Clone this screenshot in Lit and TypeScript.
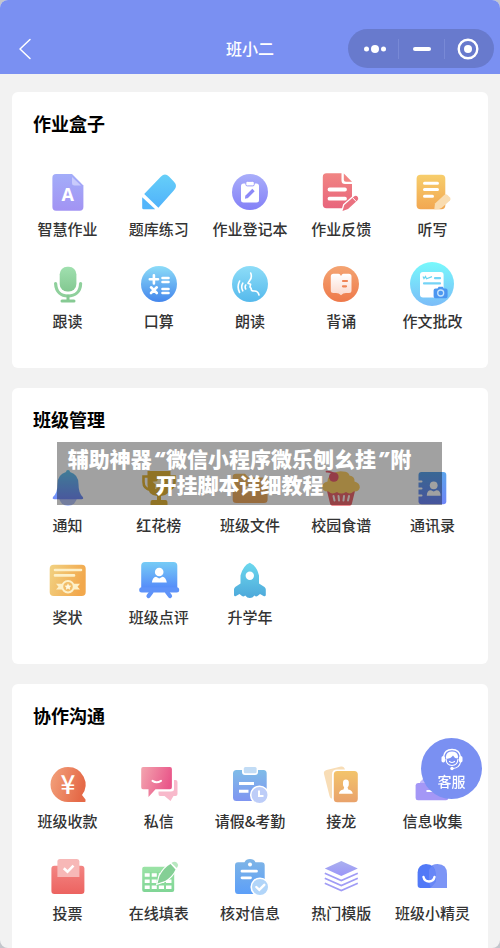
import { LitElement, html, css, svg, type SVGTemplateResult } from "lit";
import { customElement, property } from "lit/decorators.js";

/* Vertical two-stop gradient shared by the icon drawings. */
const grad = (id: string, from: string, to: string, flat = false) => svg`
  <linearGradient id=${id} x1="0" y1="0" x2=${flat ? "1" : "0"} y2=${flat ? "0.3" : "1"}>
    <stop offset="0" stop-color=${from}></stop>
    <stop offset="1" stop-color=${to}></stop>
  </linearGradient>`;

const icons: Record<string, SVGTemplateResult> = {
  smart: svg`${grad("g", "#a3adf9", "#a293f3")}
    <path fill="url(#g)" d="M10 4H26L37.400 15.500V37Q37.400 40.700 33.700 40.700H10Q6.400 40.700 6.400 37V7.700Q6.400 4 10 4Z"/>
    <path fill="#c9cbfc" d="M26 7L35 15.500H28.500Q26 15.500 26 13Z"/>
    <text class="letter" x="21.700" y="30.500" font-size="18" text-anchor="middle">A</text>`,
  pencil: svg`${grad("g", "#66cff8", "#50b2fb")}
    <path fill="url(#g)" d="M7.200 24L24 6.600Q28 2.600 32 6.600L37 11.800Q41 16 37 20.300L21.400 37.800Z"/>
    <path fill="#53b5fa" d="M5.200 27.300L18.200 39.300H6.700Q5.200 39.300 5.200 37.800Z"/>`,
  register: svg`${grad("g", "#a9aefa", "#8480f7")}
    <circle cx="22" cy="22" r="18" fill="url(#g)"/>
    <rect x="13" y="13.500" width="18" height="19" rx="2.500" fill="#fff"/>
    <rect x="17.800" y="11.300" width="8.500" height="4.600" rx="1.500" fill="#fff" stroke="#9c9cf9" stroke-width="1"/>
    <path d="M18.500 27L25.500 20" stroke="#8c89f8" stroke-width="3.400"/>
    <path d="M17 28.700L17.400 25.400L20 28Z" fill="#8c89f8"/>`,
  feedback: svg`${grad("g", "#f18583", "#e8657c")}
    <path fill="url(#g)" d="M7.500 3.300H22.500V10.500Q22.500 14 26 14H33V35Q33 38.300 29.500 38.300H7.500Q3.800 38.300 3.800 34.600V7Q3.800 3.300 7.500 3.300Z"/>
    <path fill="#f18583" d="M24.800 3.600L33 11.700H27Q24.800 11.700 24.800 9.500Z"/>
    <path d="M10.500 19.500H26M10.500 28.700H26" stroke="#fff" stroke-width="3.800" stroke-linecap="round"/>
    <path d="M23.500 41L25.300 35L35 26.500Q37 25 38.800 27Q40 29 38.300 30.500L29 39Z" fill="#ea7180" stroke="#fff" stroke-width="2.600" paint-order="stroke"/>
    <path d="M33.500 27.600L37.300 31.600" stroke="#fff" stroke-width="1"/>`,
  dictation: svg`${grad("g", "#f7ce6c", "#f2a751")}
    <rect x="6.600" y="4.700" width="28.700" height="34.600" rx="4" fill="url(#g)"/>
    <path d="M14.500 13.200H27.500M14.500 19.600H27.500M14.500 26.200H22.500" stroke="#fff" stroke-width="3" stroke-linecap="round"/>
    <path d="M24.300 39.300L25 33.500L34.500 24.700Q36 23.600 37.500 25L40 27.600Q41.200 29 40 30.400L31.500 38Q29.500 39.500 24.300 39.300Z" fill="#f9dcb0"/>`,
  mic: svg`${grad("g", "#a0e0af", "#83c891")}
    <rect x="13.700" y="4.700" width="16.700" height="24.800" rx="7.500" fill="url(#g)"/>
    <path d="M9.600 21.500C10 30 15 34 22 34S34.400 30 34.600 21.500" fill="none" stroke="#8fd09c" stroke-width="3.200" stroke-linecap="round"/>
    <path d="M22 34V39M16 39H28" stroke="#86ca93" stroke-width="3" stroke-linecap="round"/>`,
  calc: svg`${grad("g", "#8cdcf8", "#4486ec")}
    <circle cx="22" cy="22" r="18" fill="url(#g)"/>
    <path d="M12.800 17.300H21M16.900 13.200V21.400M25.500 16H31.500M25.500 20H31.500M14 25.300L19.800 31M19.800 25.300L14 31M25.500 27H31.500M25.500 31H31.500" stroke="#fff" stroke-width="2.600" stroke-linecap="round"/>`,
  recite: svg`${grad("g", "#8eddf8", "#55b9ec")}
    <circle cx="22" cy="22" r="18" fill="url(#g)"/>
    <path d="M22.700 11Q24.300 15 22 18L20 21.200L22.600 22.300L22 25L23.200 26.600Q22.800 29.200 26.500 29Q30 29 31 33M11.600 19Q8.600 25 11.600 30.500M14.800 21.200Q12.600 25 14.800 28.800M17.700 23Q16.600 25 17.700 27" fill="none" stroke="#fff" stroke-width="1.600" stroke-linecap="round" stroke-linejoin="round"/>`,
  book: svg`${grad("g", "#f4a472", "#ee794a")}${grad("h", "#ffffff", "#fbd9cd")}
    <circle cx="22" cy="22" r="18" fill="url(#g)"/>
    <path fill="url(#h)" d="M14.500 11.700H19.500Q21 11.700 22 14Q23 11.700 24.500 11.700H29.800Q32.500 11.700 32.500 14.400V28.500Q32.500 31 30 31H27Q24 31 22 33.300Q20 31 17 31H14.300Q11.800 31 11.800 28.500V14.400Q11.800 11.700 14.500 11.700Z"/>
    <path d="M24 19H28M24 24.300H27" stroke="#ef8557" stroke-width="2.200" stroke-linecap="round"/>`,
  essay: svg`${grad("g", "#78f9fc", "#7bbcf8")}
    <circle cx="22" cy="22" r="22" fill="url(#g)"/>
    <rect x="10" y="10" width="23.600" height="25.600" rx="3" fill="#fff"/>
    <path d="M13 14.500L14 16.500L15.500 14.500L16.500 16.700L22 14.600" fill="none" stroke="#6ad4f0" stroke-width="1.200"/>
    <path d="M25 16.200H30M14 21.400H30" stroke="#74d4f6" stroke-width="2.200" stroke-linecap="round"/>
    <path d="M25.500 26.500H27.500L28.700 24.700H32.700L33.900 26.500H35.700Q37.600 26.500 37.600 28.400V34.300Q37.600 36.200 35.700 36.200H25.500Q23.600 36.200 23.600 34.300V28.400Q23.600 26.500 25.500 26.500Z" fill="#4b96f0"/>
    <circle cx="30.700" cy="31" r="3" fill="none" stroke="#c4e2fc" stroke-width="1.300"/>`,
  bell: svg`${grad("g", "#66c6ee", "#748cf9")}
    <circle cx="22" cy="31" r="9" fill="#b6c6fb"/>
    <path fill="url(#g)" d="M20 6Q20 4 22 4T24 6Q32.500 8.500 32.500 18Q32.500 27 36.800 31Q38 33.200 35.500 33.200H8.400Q6 33.200 7 31Q11.500 27 11.500 18Q11.500 8.500 20 6Z"/>`,
  trophy: svg`<path fill="none" stroke="#e5b63c" stroke-width="2.600" d="M13 10.500H6.500V16Q6.500 23 14 24M31 10.500H37.500V16Q37.500 23 30 24"/>
    <path fill="#e5b63c" d="M10.500 5H33.500V19Q33.500 29 24 30V34H28.500Q30.500 34 30.500 37V39H13.500V37Q13.500 34 15.500 34H20V30Q10.500 29 10.500 19Z"/>
    <path fill="#fff2c4" d="M22 11L24 15.200L28.500 15.700L25.200 18.800L26 23.200L22 21L18 23.200L18.800 18.800L15.500 15.700L20 15.200Z"/>`,
  folder: svg`${grad("g", "#f6c36c", "#efaa61")}
    <path fill="url(#g)" d="M8 7.700H17L20.500 11.500H36Q39.600 11.500 39.600 15V33.500Q39.600 37 36 37H8.300Q4.700 37 4.700 33.500V11Q4.700 7.700 8 7.700Z"/>
    <path fill="#fff0cf" d="M22 16L23.700 20L28 20.400L24.800 23.200L25.800 27.500L22 25.200L18.200 27.500L19.200 23.200L16 20.400L20.300 20Z"/>`,
  cupcake: svg`<path fill="#ed6970" d="M7.500 23H36.500L32.800 38Q32.400 39.700 30.700 39.700H13.300Q11.600 39.700 11.200 38Z"/>
    <path d="M14.500 30L15.500 34.500M19.500 30L20 34.500M25 30L24.500 34.500M30 30L29 34.500" stroke="#fff2ee" stroke-width="2" stroke-linecap="round"/>
    <path fill="#fed067" d="M14 8Q18 4.500 24 5.500Q29.500 5.500 30.500 9.500Q36 10.500 35.500 15.500Q41 17 40.800 21.500Q40 26 34.500 25.500Q31 29 27 26Q22 29 18 26Q13 29 9.500 25.500Q3.500 26 3.200 20.500Q3.800 16.500 8.500 15.500Q8.500 10 14 8Z"/>
    <circle cx="14.800" cy="11" r="4.800" fill="#ea5f72"/>
    <path d="M14.800 8Q12.500 5.500 7.500 5.700" fill="none" stroke="#ea5f72" stroke-width="1.700" stroke-linecap="round"/>`,
  contacts: svg`${grad("g", "#5ba4ec", "#7086f8")}
    <rect x="8.500" y="6" width="27.800" height="32.300" rx="3" fill="url(#g)"/>
    <path d="M7 15.500H11.500M7 22.500H11.500M7 29.500H11.500" stroke="#fff" stroke-width="2" stroke-linecap="round"/>
    <circle cx="23.700" cy="19.300" r="3.900" fill="#fff"/>
    <path fill="#fff" d="M16.800 29.800Q16.800 24 21 24.200L23.700 25.500L26.400 24.200Q30.600 24 30.600 29.800Z"/>`,
  award: svg`${grad("g", "#f1d283", "#f2a84c", true)}
    <rect x="3.700" y="6.700" width="36" height="31.300" rx="4" fill="url(#g)"/>
    <path d="M9 12H35M9 17.400H28" stroke="#fdf0c8" stroke-width="2.600" stroke-linecap="round"/>
    <path fill="#fdf0c8" d="M10 25.800H34L31.500 28.700L34 31.600H10L12.500 28.700Z"/>
    <circle cx="22" cy="28.700" r="5.800" fill="#f2bd68" stroke="#fdf0c8" stroke-width="2"/>
    <path fill="#fff8df" d="M22 25.300L23 27.500L25.400 27.800L23.700 29.400L24.100 31.800L22 30.600L19.900 31.800L20.300 29.400L18.600 27.800L21 27.500Z"/>`,
  board: svg`${grad("g", "#76ccf6", "#568cf9")}
    <path fill="url(#g)" d="M8 4H36.500Q40.300 4 40.300 8V30H4.200V8Q4.200 4 8 4Z"/>
    <rect x="2.200" y="29.300" width="40" height="5.200" rx="2.500" fill="#5f93f9"/>
    <path d="M14.500 34L11.500 38M30 34L33 38" stroke="#5f93f9" stroke-width="4.200" stroke-linecap="round"/>
    <circle cx="22.200" cy="14" r="4.300" fill="#fff"/>
    <path fill="#fff" d="M14.900 24.400Q15.500 19.400 19 18.700L22.200 20.400L25.400 18.700Q29 19.400 29.800 24.400Z"/>`,
  rocket: svg`${grad("g", "#6cd8ee", "#4da8da")}
    <path fill="url(#g)" d="M21.800 4.700Q28.500 7.500 31 17.500V25.500L36.500 29Q37.800 30 37.800 31.500V37Q37.500 38.800 35.500 38L32 36L29.500 38Q28 39 26.500 37.500Q24.500 40 21.800 40T17.200 37.500Q15.500 39 14 38L11.500 36L8 38Q6.200 38.800 6 37V31.500Q6 30 7.200 29L12.500 25.500V17.500Q15 7.500 21.800 4.700Z"/>
    <circle cx="21.800" cy="17.700" r="4.200" fill="#fff"/>`,
  pay: svg`${grad("g", "#f3a37d", "#e56a48", true)}
    <path fill="url(#g)" d="M22 5A17.500 17.500 0 0 1 36 33L39.500 37.500V39.500L39 40H22A17.500 17.500 0 0 1 22 5Z"/>
    <text class="yuan" x="22" y="31.500" font-size="26" text-anchor="middle">¥</text>`,
  chat: svg`${grad("g", "#f3a5af", "#e9578a", true)}
    <path fill="#f8b9cb" d="M37 18H38.500Q40.500 18 40.500 20V32Q40.500 34 38.500 34H36.500L33.500 39L27.500 34H23Q21.500 34 21.500 32V29.500H34Q37 29.500 37 27Z"/>
    <path fill="url(#g)" d="M6 5H33Q34.900 5 34.900 7V25.200Q34.900 27.200 33 27.200H18.500L11.500 35V27.200H6Q4.200 27.200 4.200 25.200V7Q4.200 5 6 5Z"/>
    <path d="M15.500 18.800Q19.500 21.500 24 18.800" fill="none" stroke="#fff" stroke-width="2" stroke-linecap="round"/>`,
  leave: svg`${grad("g", "#7fbce8", "#7f95f1")}
    <path fill="url(#g)" d="M8.500 8H14V10Q14 13 17 13H27Q30 13 30 10V8H35.500Q38.700 8 38.700 11.500V35.500Q38.700 39 35.500 39H8.500Q5 39 5 35.500V11.500Q5 8 8.500 8Z"/>
    <rect x="15.800" y="5" width="12.800" height="6.300" rx="1.500" fill="#c2dcf5"/>
    <path d="M11 21.500H26M11 29.200H20.500" stroke="#fff" stroke-width="3"/>
    <circle cx="31.500" cy="33" r="8.800" fill="#bdcdf8" stroke="#fff" stroke-width="1.600"/>
    <path d="M31 28.500V34H35.500" fill="none" stroke="#fff" stroke-width="2"/>`,
  cards: svg`${grad("g", "#f3c46b", "#e9a26b")}
    <path fill="#f8ddb6" d="M7.500 8L22 4.500Q25 4 26 7.500H18Q13 7.500 13 12.500V36.500Q11.500 37 10.500 34L5 12Q4.200 9 7.500 8Z"/>
    <rect x="14.800" y="9" width="24" height="31.300" rx="3.500" fill="url(#g)"/>
    <rect x="24" y="17.500" width="5.800" height="8" rx="2.900" fill="#fff"/>
    <path fill="#fff" d="M20 31.700Q20 28.500 24.500 27.600L25.500 24H28.200L29.200 27.600Q33.500 28.500 33.700 31.700Z"/>`,
  collect: svg`<path fill="#c0b8fa" d="M10 20L18 12H28L36 20V24H10Z"/>
    <path fill="#a497f6" d="M8 21H36Q38.300 21 38.300 23.500V36Q38.300 38.200 36 38.200H8Q5.600 38.200 5.600 36V23.500Q5.600 21 8 21Z"/>
    <path d="M16.500 29H27.500" stroke="#fff" stroke-width="2.200"/>`,
  vote: svg`${grad("g", "#f38583", "#ec6360")}
    <rect x="5.400" y="11.700" width="33" height="28.300" rx="3" fill="url(#g)"/>
    <path fill="#f7b8b7" d="M14 5H31Q33.400 5 33.400 7.500V23H11.400V7.500Q11.400 5 14 5Z"/>
    <path d="M17.800 14.300L21.500 17.800L27.500 11.700" fill="none" stroke="#fff" stroke-width="2.600"/>`,
  sheet: svg`${grad("g", "#9be3a6", "#80d596")}
    <rect x="5.200" y="12.700" width="32" height="25.300" rx="2" fill="url(#g)"/>
    <path d="M7.700 21H34.500M7.700 27.300H34.500M7.700 33.300H34.500" stroke="#fff" stroke-width="3.600"/>
    <path d="M13.700 18V36M20.800 18V36M28 18V36" stroke="#8adb9b" stroke-width="2"/>
    <path d="M20.500 29.500L22.500 22Q27 13.500 33.500 10L38.500 15.500Q35.500 22.500 28 27Z" fill="#84cf95" stroke="#fff" stroke-width="2.200" paint-order="stroke"/>
    <path d="M34.500 9L36 8Q38 7 40 8.800Q42 11 40.500 13L39.700 14Z" fill="#b8e8c0"/>`,
  verify: svg`${grad("g", "#7fb5e6", "#5c9ff8")}
    <path fill="url(#g)" d="M10 8.300H16.500Q18 5 22 5T27.500 8.300H33.500Q36.700 8.300 36.700 11.500V36.500Q36.700 40 33.500 40H10Q7 40 7 36.500V11.500Q7 8.300 10 8.300Z"/>
    <circle cx="22" cy="10.500" r="2" fill="#fff"/>
    <path d="M14 17.200H28.500M14 23.800H22.500" stroke="#fff" stroke-width="2.800" stroke-linecap="round"/>
    <circle cx="32" cy="33" r="8.800" fill="#b1d5f9" stroke="#fff" stroke-width="1.600"/>
    <path d="M28.300 33L31.300 35.900L36.300 30.800" fill="none" stroke="#fff" stroke-width="2.400" stroke-linecap="round"/>`,
  layers: svg`${grad("g", "#aab0ef", "#9b95f8")}
    <path fill="url(#g)" d="M22.300 7L38.800 14.500L22.300 22L5.800 14.500Z"/>
    <path d="M5.800 19.300L22.300 26.500L38.800 19.300M5.800 24.300L22.300 31.500L38.800 24.300M5.800 29.300L22.300 36.500L38.800 29.300" fill="none" stroke="#a09cf5" stroke-width="1.700"/>`,
  genie: svg`<path fill="#7c95f6" d="M19 14Q22 10 27.500 10Q37 10 37 20V34H19Z"/>
    <path fill="#5179f7" d="M16 10Q25.500 10.500 25.500 20V28L20 34H10.500Q7.600 34 7.600 31V18.500Q8 10.500 16 10Z"/>
    <path fill="#6786f7" d="M22.300 12Q25.500 15 25.500 20V28L21 33.500Q19 31 19 26V16Q20 13.500 22.300 12Z"/>
    <path d="M13.500 23Q14.500 27.500 19 27.500T24.500 23" fill="none" stroke="#fff" stroke-width="2.400" stroke-linecap="round"/>`,
};

interface Entry {
  icon: string;
  label: string;
}

const homework: Entry[] = [
  { icon: "smart", label: "智慧作业" },
  { icon: "pencil", label: "题库练习" },
  { icon: "register", label: "作业登记本" },
  { icon: "feedback", label: "作业反馈" },
  { icon: "dictation", label: "听写" },
  { icon: "mic", label: "跟读" },
  { icon: "calc", label: "口算" },
  { icon: "recite", label: "朗读" },
  { icon: "book", label: "背诵" },
  { icon: "essay", label: "作文批改" },
];

const management: Entry[] = [
  { icon: "bell", label: "通知" },
  { icon: "trophy", label: "红花榜" },
  { icon: "folder", label: "班级文件" },
  { icon: "cupcake", label: "校园食谱" },
  { icon: "contacts", label: "通讯录" },
  { icon: "award", label: "奖状" },
  { icon: "board", label: "班级点评" },
  { icon: "rocket", label: "升学年" },
];

const teamwork: Entry[] = [
  { icon: "pay", label: "班级收款" },
  { icon: "chat", label: "私信" },
  { icon: "leave", label: "请假&考勤" },
  { icon: "cards", label: "接龙" },
  { icon: "collect", label: "信息收集" },
  { icon: "vote", label: "投票" },
  { icon: "sheet", label: "在线填表" },
  { icon: "verify", label: "核对信息" },
  { icon: "layers", label: "热门模版" },
  { icon: "genie", label: "班级小精灵" },
];

@customElement("app-entry")
export class AppEntry extends LitElement {
  @property() icon = "";
  @property() label = "";

  static styles = css`
    :host {
      display: block;
      min-width: 0;
    }
    .entry {
      display: flex;
      flex-direction: column;
      align-items: center;
      gap: 3px;
      width: 100%;
      padding: 0;
      border: 0;
      background: none;
      color: #333;
      font: inherit;
      font-size: 15px;
      font-weight: 500;
      line-height: 24px;
      white-space: nowrap;
      cursor: pointer;
    }
    .icon {
      display: block;
      width: 44px;
      height: 44px;
      overflow: visible;
    }
    .letter {
      fill: #fff;
      font-family: "Open Sans", sans-serif;
      font-weight: 700;
    }
    .yuan {
      fill: #fff;
      font-family: "Noto Sans CJK SC", sans-serif;
      font-weight: 500;
    }
  `;

  render() {
    return html`<button class="entry" type="button">
      <svg class="icon" viewBox="0 0 44 44" aria-hidden="true">${icons[this.icon]}</svg>
      <span>${this.label}</span>
    </button>`;
  }
}

@customElement("app-root")
export class AppRoot extends LitElement {
  static styles = css`
    :host {
      display: block;
      min-height: 100vh;
      background: #c4c6cc;
      font-family: "Noto Sans CJK SC", sans-serif;
    }
    .screen {
      display: flex;
      flex-direction: column;
      min-height: 100vh;
      border-radius: 8px;
      overflow: hidden;
      background: #f2f2f2;
    }
    .bar {
      display: grid;
      grid-template-columns: 1fr auto 1fr;
      align-items: center;
      padding: 29px 6px 6px;
      background: #7a90f2;
      color: #fff;
    }
    .back,
    .tool {
      display: flex;
      align-items: center;
      justify-content: center;
      padding: 0;
      border: 0;
      background: none;
      cursor: pointer;
    }
    .back {
      width: 38px;
      height: 39px;
    }
    .name {
      margin: 0;
      padding-bottom: 2px;
      font-size: 16px;
      font-weight: 500;
      line-height: 24px;
    }
    .capsule {
      display: flex;
      justify-self: end;
      align-items: center;
      height: 39px;
      padding: 0 4px;
      box-sizing: border-box;
      border-radius: 20px;
      background: #687acd;
    }
    .tool {
      box-sizing: border-box;
      width: 46px;
      height: 20px;
    }
    .tool + .tool {
      border-left: 1px solid #7889d6;
    }
    .main {
      display: flex;
      flex: 1;
      flex-direction: column;
      gap: 20px;
      padding: 18px 12px 0;
    }
    .card {
      position: relative;
      padding: 19px 10px 35px;
      border-radius: 6px;
      background: #fff;
    }
    .card:last-child {
      flex: 1;
      padding-bottom: 22px;
      border-radius: 6px 6px 0 0;
    }
    .title {
      margin: 0 0 35px;
      padding-left: 11px;
      color: #000;
      font-size: 18px;
      font-weight: 700;
      line-height: 24px;
    }
    .grid {
      display: grid;
      grid-template-columns: repeat(5, minmax(0, 1fr));
      row-gap: 21px;
    }
    .banner {
      position: absolute;
      top: 54px;
      left: 45px;
      right: 46px;
      margin: 0;
      padding: 3px 20px 8px 0;
      background: rgba(0, 0, 0, 0.37);
      color: #fff;
      font-size: 21px;
      font-weight: 900;
      line-height: 26px;
      text-align: center;
      white-space: nowrap;
    }
    .quote {
      padding: 0 2px;
      font-family: "Noto Sans", sans-serif;
      font-style: italic;
      line-height: 1;
    }
    .service {
      position: fixed;
      right: 18px;
      bottom: 149px;
      display: flex;
      flex-direction: column;
      align-items: center;
      width: 61px;
      height: 61px;
      padding: 10px 0 0;
      border: 0;
      border-radius: 50%;
      background: #7a90f2;
      color: #fff;
      font: inherit;
      font-size: 14px;
      font-weight: 500;
      line-height: 20px;
      cursor: pointer;
    }
  `;

  private card(title: string, entries: Entry[], extra: unknown = null) {
    return html`<section class="card">
      <h2 class="title">${title}</h2>
      <div class="grid">
        ${entries.map((e) => html`<app-entry .icon=${e.icon} .label=${e.label}></app-entry>`)}
      </div>
      ${extra}
    </section>`;
  }

  render() {
    return html`
      <div class="screen">
        <header class="bar">
          <button class="back" type="button" aria-label="返回">
            <svg width="14" height="22" viewBox="0 0 14 22" fill="none" stroke="#fff" stroke-width="1.500" stroke-linecap="round" stroke-linejoin="round">
              <path d="M12 1.500L2 11L12 20.500"></path>
            </svg>
          </button>
          <h1 class="name">班小二</h1>
          <div class="capsule">
            <button class="tool" type="button" aria-label="更多">
              <svg width="24" height="10" viewBox="0 0 24 10" fill="#fff">
                <circle cx="3.500" cy="5" r="2.500"></circle>
                <circle cx="12" cy="5" r="4"></circle>
                <circle cx="20.500" cy="5" r="2.500"></circle>
              </svg>
            </button>
            <button class="tool" type="button" aria-label="最小化">
              <svg width="18" height="4" viewBox="0 0 18 4" fill="#fff">
                <rect width="18" height="4" rx="2"></rect>
              </svg>
            </button>
            <button class="tool" type="button" aria-label="关闭">
              <svg width="22" height="22" viewBox="0 0 22 22" fill="none">
                <circle cx="11" cy="11" r="9.300" stroke="#fff" stroke-width="2.400"></circle>
                <circle cx="11" cy="11" r="4" fill="#fff"></circle>
              </svg>
            </button>
          </div>
        </header>
        <main class="main">
          ${this.card("作业盒子", homework)}
          ${this.card(
            "班级管理",
            management,
            html`<p class="banner">辅助神器<span class="quote">“</span>微信小程序微乐刨幺挂<span class="quote">”</span>附<br />开挂脚本详细教程</p>`,
          )}
          ${this.card("协作沟通", teamwork)}
        </main>
      </div>
      <button class="service" type="button">
        <svg width="22" height="23" viewBox="0 0 22 23" fill="none" aria-hidden="true">
          <path d="M2.500 9Q3.500 1.500 11 1.500T19.500 9" stroke="#fff" stroke-width="1.400"></path>
          <path d="M4.800 9Q5.500 3.600 11 3.600T17.200 9L16.500 10.500Q13 10 12 7.500Q10 10.500 5.300 11Z" fill="#fff"></path>
          <rect x="0.500" y="8" width="3.600" height="6.500" rx="1.800" fill="#fff"></rect>
          <rect x="17.900" y="8" width="3.600" height="6.500" rx="1.800" fill="#fff"></rect>
          <path d="M5 11Q5.500 17.500 11 17.500T17 11" stroke="#fff" stroke-width="1.200"></path>
          <path d="M8.500 13.500Q11 15.500 13.500 13.500M19.500 14Q18.500 20 12 20.500" stroke="#fff" stroke-width="1.200" stroke-linecap="round"></path>
          <circle cx="11" cy="20.500" r="1.700" fill="#fff"></circle>
        </svg>
        <span>客服</span>
      </button>
    `;
  }
}
